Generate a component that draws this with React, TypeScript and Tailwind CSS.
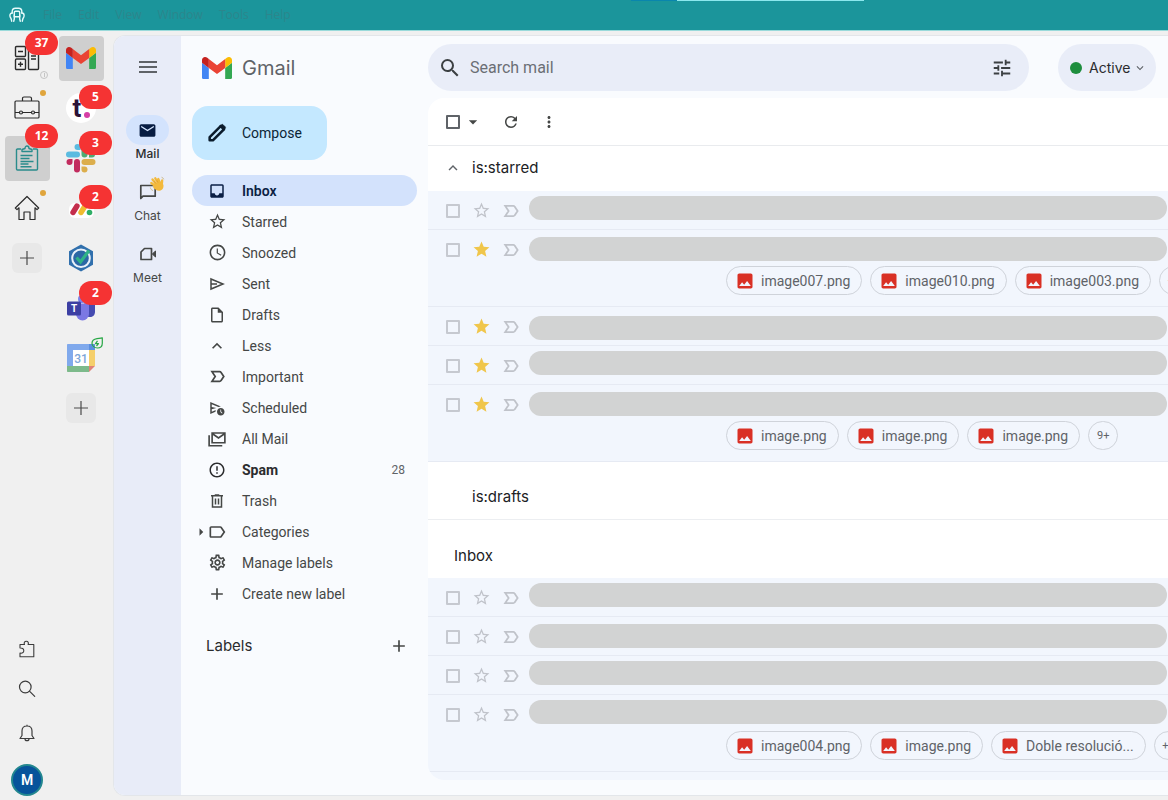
import { useState } from "react";
import type { ReactNode } from "react";
import {
  MdAdd,
  MdArrowDropDown,
  MdErrorOutline,
  MdInbox,
  MdKeyboardArrowDown,
  MdKeyboardArrowUp,
  MdLabelOutline,
  MdMail,
  MdMenu,
  MdMoreVert,
  MdOutlineInsertDriveFile,
  MdOutlineScheduleSend,
  MdOutlineSettings,
  MdPhoto,
  MdRefresh,
  MdSchedule,
  MdSearch,
  MdStar,
  MdStarBorder,
  MdTune,
} from "react-icons/md";

/* ---------- Logos and icons ---------- */

function GmailLogo({ className }: { className?: string }) {
  return (
    <svg viewBox="52 42 88 66" className={className} aria-hidden="true">
      <path fill="#4285f4" d="M58 108h14V74L52 59v43c0 3.32 2.69 6 6 6" />
      <path fill="#34a853" d="M120 108h14c3.32 0 6-2.69 6-6V59l-20 15" />
      <path fill="#fbbc04" d="M120 48v26l20-15v-8c0-7.42-8.47-11.65-14.4-7.2" />
      <path fill="#ea4335" d="M72 74V48l24 18 24-18v26L96 92" />
      <path fill="#c5221f" d="M52 51v8l20 15V48l-5.6-4.2c-5.94-4.45-14.4-.22-14.4 7.2" />
    </svg>
  );
}

function ChairLogo() {
  return (
    <svg viewBox="0 0 16 16" className="size-4" fill="none" stroke="#e6fbfb" strokeWidth="1.4" strokeLinejoin="round" strokeLinecap="round" aria-hidden="true">
      <path d="M3.200 6V4.600c0-2 1.200-3.400 3.200-3.400h3.200c2 0 3.200 1.400 3.200 3.400V6" />
      <path d="M5.300 5.500c0-.8.400-1.200 1.200-1.200h3c.8 0 1.200.4 1.200 1.200v4.200H5.300z" />
      <path d="M3.200 6C1.800 6 .9 7 .9 8.400c0 2 .8 2.400 1.200 3.200l.6 2.600M5.300 8v4l-.6 2.200M12.800 6c1.400 0 2.300 1 2.300 2.400 0 2-.8 2.400-1.200 3.200l-.6 2.600M10.700 8v4l.6 2.200" />
    </svg>
  );
}

function CalculatorIcon() {
  return (
    <svg viewBox="0 0 26 26" className="size-[26px]" fill="none" stroke="#2b2b2b" strokeWidth="1.400" aria-hidden="true">
      <rect x="1.500" y="1.500" width="10" height="10" rx="1" />
      <rect x="1.500" y="14" width="10" height="10.500" rx="1" />
      <rect x="14.500" y="1.500" width="10" height="23" rx="1" />
      <path d="M4 6.500h5M4 19.200h5M6.500 16.700v5M17 11h5M17 14h5M17 6h5" />
    </svg>
  );
}

function BriefcaseIcon() {
  return (
    <svg viewBox="0 0 26 26" className="size-[26px]" fill="none" stroke="#2b2b2b" strokeWidth="1.200" strokeLinejoin="round" aria-hidden="true">
      <rect x="1" y="6" width="24" height="17" rx="1" />
      <path d="M8.500 6V3.500C8.500 2.700 9 2 10 2h6c1 0 1.500.7 1.500 1.500V6M1 17.500h4.500M8.500 17.500h9M20.500 17.500H25" />
      <circle cx="7" cy="17.500" r="1.500" />
      <circle cx="19" cy="17.500" r="1.500" />
    </svg>
  );
}

function ClipboardIcon() {
  return (
    <svg viewBox="0 0 26 26" className="size-[26px]" fill="none" stroke="#2a8c8c" strokeWidth="1.400" strokeLinejoin="round" aria-hidden="true">
      <path d="M7 4H3.500c-.6 0-1 .4-1 1v19c0 .6.4 1 1 1h19c.6 0 1-.4 1-1V5c0-.6-.4-1-1-1H19" />
      <path d="M8 6.500V4.500l3-1C11 1.800 12 1 13 1s2 .8 2 2.500l3 1v2z" />
      <path d="M6.500 10.500h12M6.500 13.500h9M6.500 16.500h13M6.500 19h8M6.500 21.700h11" />
    </svg>
  );
}

function HomeIcon() {
  return (
    <svg viewBox="0 0 26 26" className="size-[26px]" fill="none" stroke="#2b2b2b" strokeWidth="1.200" strokeLinejoin="round" aria-hidden="true">
      <path d="M13 1.500 1.300 13l1.700 1.600 2-1.800V24.500h5V17h6v7.500h5V12.800l2 1.800 1.700-1.600z" />
    </svg>
  );
}

function SlackLogo() {
  return (
    <svg viewBox="0 0 30 30" className="size-[30px]" aria-hidden="true">
      <g fill="#5bbbe0">
        <path d="M11.500 1A3 3 0 0 0 8.500 4a3 3 0 0 0 3 3h3V4a3 3 0 0 0-3-3z" />
        <rect x="0" y="8.500" width="14" height="6" rx="3" />
      </g>
      <g fill="#4dab74">
        <rect x="15.500" y="1" width="6" height="13.500" rx="3" />
        <path d="M23 14.500v-3a3 3 0 1 1 3 3z" />
      </g>
      <g fill="#dcae4c">
        <rect x="15.500" y="16" width="14" height="6" rx="3" />
        <path d="M15.500 23.500h3a3 3 0 1 1-3 3z" />
      </g>
      <g fill="#c22c5e">
        <rect x="8" y="16" width="6" height="13.500" rx="3" />
        <path d="M6.500 16v3a3 3 0 1 1-3-3z" />
      </g>
    </svg>
  );
}

function MondayLogo() {
  return (
    <svg viewBox="0 0 30 30" className="size-[30px]" aria-hidden="true">
      <rect x="3" y="10" width="25" height="15" rx="6" fill="#fff" />
      <path d="m7 19.500 4-6.500" stroke="#c42e4c" strokeWidth="5.400" strokeLinecap="round" />
      <path d="m15 19.500 4-6.500" stroke="#f0bb2f" strokeWidth="5.400" strokeLinecap="round" />
      <circle cx="23.500" cy="19.500" r="2.800" fill="#2fae66" />
    </svg>
  );
}

function HexCheckLogo() {
  return (
    <svg viewBox="0 0 28 28" className="size-7" aria-hidden="true">
      <path d="M14 .5 26 7.200v13.600L14 27.500 2 20.800V7.200z" fill="#3170ad" />
      <circle cx="14" cy="14.200" r="8.800" fill="#2b68a5" stroke="#e9f2fa" strokeWidth="2" />
      <path d="m9.500 13.500 4 4.500L22 6.500" fill="none" stroke="#2fb386" strokeWidth="3.200" />
    </svg>
  );
}

function TeamsLogo() {
  return (
    <svg viewBox="0 0 30 30" className="size-[30px]" aria-hidden="true">
      <circle cx="23" cy="7" r="3" fill="#5059c9" />
      <path d="M18 10.500h10c.6 0 1 .4 1 1V19c0 3-2.300 5-5 5s-6-2-6-5z" fill="#454bb0" />
      <circle cx="16" cy="6" r="4" fill="#7b83eb" />
      <path d="M10 10.500h13V21a6.500 6.500 0 0 1-13 0z" fill="#7b78e3" />
      <rect x="1" y="8.500" width="14" height="14" rx="1.500" fill="#3c3fa3" />
      <text x="8" y="19.300" textAnchor="middle" fontSize="10" fontWeight="700" fill="#fff">T</text>
    </svg>
  );
}

function CalendarLogo() {
  return (
    <svg viewBox="0 0 30 30" className="size-[30px]" aria-hidden="true">
      <path d="M2 1h21v6H7v16H1V2c0-.6.400-1 1-1z" fill="#80a9ec" />
      <path d="M23 1h5c.6 0 1 .4 1 1v21h-6z" fill="#f5cf6b" />
      <path d="M23 1h5c.6 0 1 .4 1 1v5h-6z" fill="#5b8fe0" />
      <path d="M1 23h22v6H2c-.6 0-1-.4-1-1z" fill="#7dba8b" />
      <path d="M23 23h6l-6 6z" fill="#e08277" />
      <path d="M7 7h16v16H7z" fill="#fff" />
      <text x="15" y="19.500" textAnchor="middle" fontSize="12" fontWeight="500" fill="#7da5d8">31</text>
    </svg>
  );
}

function LeafIcon() {
  return (
    <svg viewBox="0 0 12 12" className="size-3" fill="none" stroke="#28a745" strokeWidth="1.200" strokeLinejoin="round" aria-hidden="true">
      <path d="M11.300.8v5.400c0 3-2.200 4.800-5 4.800S1 9 1 6.200c0-3 2.500-4.200 5-4.600 2-.3 3.800-.1 5.300-.8z" />
      <path d="m6.500 3.800-2 2.800h3l-2 2.400" />
    </svg>
  );
}

function PuzzleIcon() {
  return (
    <svg viewBox="0 0 18 18" className="size-[18px]" fill="none" stroke="#3c3c3c" strokeWidth="1.100" strokeLinejoin="round" aria-hidden="true">
      <path d="M2 8V4.500h4.500c-.8-1.600 0-3.300 1.800-3.300s2.600 1.700 1.800 3.300h5.700v12.300H2V13c2 .6 3.800-.4 3.800-2.300S4 7.800 2 8z" />
    </svg>
  );
}

function LoupeIcon() {
  return (
    <svg viewBox="0 0 18 18" className="size-[18px]" fill="none" stroke="#3c3c3c" strokeWidth="1.200" strokeLinecap="round" aria-hidden="true">
      <circle cx="7.300" cy="7" r="5.800" />
      <path d="m11.700 11.300 5 5" />
    </svg>
  );
}

function BellIcon() {
  return (
    <svg viewBox="0 0 18 18" className="size-[18px]" fill="none" stroke="#3c3c3c" strokeWidth="1.200" strokeLinejoin="round" aria-hidden="true">
      <path d="M9 2C5.800 2 4 4.300 4 7v4.500L2 14.500h14l-2-3V7c0-2.700-1.800-5-5-5zM9 2V.8M7 14.700c0 1.200.8 2 2 2s2-.8 2-2" />
    </svg>
  );
}

function PlusIcon() {
  return (
    <svg viewBox="0 0 16 16" className="size-4" stroke="#4a4a4a" strokeWidth="1.200" aria-hidden="true">
      <path d="M8 1v14M1 8h14" />
    </svg>
  );
}

function ChatIcon() {
  return (
    <svg viewBox="0 0 18 18" className="size-[18px]" fill="none" stroke="#454746" strokeWidth="1.700" aria-hidden="true">
      <path d="M1.800 15.500V2.500h14.400v10.700H4z" strokeLinejoin="round" />
    </svg>
  );
}

function WaveIcon() {
  return (
    <svg viewBox="0 0 16 16" className="size-4" aria-hidden="true">
      <g stroke="#f3b93c" strokeWidth="2.300" strokeLinecap="round">
        <path d="m7.500 8.500-4-5M9.500 7.500 6.300 2.300M11.200 7.500 9.300 3M7 10.500 2.300 7M12.700 9l.5-4.500" />
      </g>
      <path d="M5.500 8.500 11 5.500l3.300 3c.8 3-1 6-3.800 6.300C8 15 5 13 4 11z" fill="#f3b93c" />
      <path d="M6.800 7.500 5 5.200M9 6.500 7.700 4.200" stroke="#d9922a" strokeWidth=".6" />
      <path d="M1.300 11.500c.3 1.600 1.300 2.700 2.700 3M12.500 1.200c1.200.3 2 1 2.300 2.200" fill="none" stroke="#c9b98f" strokeWidth=".9" />
    </svg>
  );
}

function MeetIcon() {
  return (
    <svg viewBox="0 0 18 18" className="size-[18px]" fill="none" stroke="#454746" strokeWidth="1.700" strokeLinejoin="round" aria-hidden="true">
      <path d="M5.500 3.500h7v11H2V7z" />
      <path d="m13.300 9 3.200-3v6z" fill="#454746" strokeWidth="1" />
    </svg>
  );
}

function SentIcon() {
  return (
    <svg viewBox="0 0 24 24" className="size-[18px]" fill="none" stroke="currentColor" strokeWidth="2" aria-hidden="true">
      <path d="M4 5.300 20 12 4 18.700zM4 12h8" />
    </svg>
  );
}

function ImportantIcon({ className }: { className?: string }) {
  return (
    <svg viewBox="0 0 20 20" className={className} fill="none" stroke="currentColor" strokeWidth="1.800" aria-hidden="true">
      <path d="M4.200 4.900h8.100c.6 0 1 .2 1.300.7l3 4.400-3 4.400c-.3.5-.7.7-1.300.7H4.200L7.600 10z" />
    </svg>
  );
}

function PencilIcon() {
  return (
    <svg viewBox="0 0 24 24" className="size-[22px]" fill="none" stroke="#0b1c2c" strokeWidth="2.800" strokeLinejoin="round" aria-hidden="true">
      <path d="M4 20v-3.500L16 4.500l3.500 3.500L7.500 20z" />
      <path d="M15 3.800 17.300 2.600c.5-.2 1-.1 1.400.3l2.400 2.400c.4.4.4 1 .1 1.500L20 9z" fill="#0b1c2c" strokeWidth=".5" />
    </svg>
  );
}

function AllMailIcon() {
  return (
    <svg viewBox="0 0 24 24" className="size-[18px]" fill="none" stroke="currentColor" strokeWidth="2.200" aria-hidden="true">
      <path d="M5.500 4h17v13h-17zM6 5l8 5.500L22 5M1.500 7v14H19" />
    </svg>
  );
}

function TrashIcon() {
  return (
    <svg viewBox="0 0 24 24" className="size-[18px]" fill="none" stroke="currentColor" strokeWidth="2" aria-hidden="true">
      <path d="M4 5h16M9 4h6M6 5v15h12V5M10 8.500v8M14 8.500v8" />
    </svg>
  );
}

/* ---------- App rails ---------- */

// Vertical placement of a badge against its tile
const badgeTop = {
  over: "-top-[9px]",
  high: "-top-[2px]",
  low: "top-[2px]",
};

interface RailItemProps {
  label: string;
  icon: ReactNode;
  active?: boolean;
  badge?: number;
  badgeAt?: keyof typeof badgeTop;
  dot?: boolean;
  extra?: ReactNode;
}

function RailItem({ label, icon, active, badge, badgeAt = "high", dot, extra }: RailItemProps) {
  return (
    <div className="relative flex h-[50px] w-[54px] items-center justify-center">
      <button
        type="button"
        aria-label={label}
        className={`flex size-[45px] items-center justify-center rounded-sm ${active ? "bg-[#cfcfcf]" : ""}`}
      >
        {icon}
      </button>
      {dot && <span className="absolute right-2 top-[7px] size-[6px] rounded-full bg-[#e0a53d]" />}
      {extra}
      {badge !== undefined && (
        <span
          className={`absolute left-[25px] z-10 flex h-6 w-[33px] items-center justify-center rounded-full bg-[#f53333] font-['Open_Sans',sans-serif] text-xs font-bold text-white ${badgeTop[badgeAt]}`}
        >
          {badge}
        </span>
      )}
    </div>
  );
}

function AddTile({ label }: { label: string }) {
  return (
    <div className="flex h-[50px] w-[54px] items-center justify-center">
      <button type="button" aria-label={label} className="flex size-[30px] items-center justify-center rounded-md bg-[#e8e8e8]">
        <PlusIcon />
      </button>
    </div>
  );
}

function WorkspaceRail() {
  return (
    <nav aria-label="Workspaces" className="flex w-[54px] flex-col items-center">
      <RailItem
        label="Accounting"
        icon={<CalculatorIcon />}
        badge={37}
        extra={
          <span className="absolute bottom-1 right-[6px] flex size-2 items-center justify-center rounded-full border border-[#c4c4c4]">
            <span className="h-1 w-px bg-[#c4c4c4]" />
          </span>
        }
      />
      <RailItem label="Work" icon={<BriefcaseIcon />} dot />
      <RailItem label="Tasks" icon={<ClipboardIcon />} active badge={12} badgeAt="over" />
      <RailItem label="Home" icon={<HomeIcon />} dot />
      <AddTile label="Add workspace" />

      <div className="mt-auto flex flex-col items-center pb-1">
        <button type="button" aria-label="Extensions" className="flex h-10 w-10 items-center justify-center">
          <PuzzleIcon />
        </button>
        <button type="button" aria-label="Search" className="flex h-10 w-10 items-center justify-center">
          <LoupeIcon />
        </button>
        <button type="button" aria-label="Notifications" className="flex h-12 w-10 items-center justify-center">
          <BellIcon />
        </button>
        <button
          type="button"
          aria-label="Account"
          className="mt-[7px] flex size-8 items-center justify-center rounded-full border-2 border-[#23878f] bg-[#07539b] text-sm font-semibold text-white"
        >
          M
        </button>
      </div>
    </nav>
  );
}

function AppRail() {
  return (
    <nav aria-label="Apps" className="flex w-[54px] flex-col items-center">
      <RailItem label="Gmail" icon={<GmailLogo className="w-[30px]" />} active />
      <RailItem
        label="Toggl"
        icon={
          <span className="relative flex size-[30px] items-center justify-center rounded-full bg-white text-[26px] font-bold text-[#2c1338]">
            <span className="pr-2">t</span>
            <span className="absolute bottom-[5px] right-[6px] size-[6px] rounded-full bg-[#d63fa6]" />
          </span>
        }
        badge={5}
        badgeAt="low"
      />
      <RailItem label="Slack" icon={<SlackLogo />} badge={3} />
      <RailItem label="Monday" icon={<MondayLogo />} badge={2} badgeAt="low" />
      <RailItem label="Checks" icon={<HexCheckLogo />} />
      <RailItem label="Teams" icon={<TeamsLogo />} badge={2} />
      <RailItem
        label="Calendar"
        icon={<CalendarLogo />}
        extra={
          <span className="absolute right-[5px] top-1">
            <LeafIcon />
          </span>
        }
      />
      <AddTile label="Add app" />
    </nav>
  );
}

/* ---------- Gmail ---------- */

function ProductRail() {
  return (
    <nav aria-label="Products" className="flex w-[67px] shrink-0 flex-col items-center bg-[#e8ecf8] font-['Inter',sans-serif] text-xs text-[#454746]">
      <button type="button" aria-label="Main menu" className="mt-[19px] mb-9 text-[#5f6368]">
        <MdMenu size={24} />
      </button>
      <a href="#mail" className="flex h-[62px] flex-col items-center font-medium text-[#2b2c2e]">
        <span className="flex h-[30px] w-[43px] items-center justify-center rounded-full bg-[#d3e3fd] text-[#071c42]">
          <MdMail size={19} />
        </span>
        <span className="leading-[18px]">Mail</span>
      </a>
      <a href="#chat" className="flex h-[62px] flex-col items-center">
        <span className="relative flex h-[30px] w-[43px] items-center justify-center">
          <ChatIcon />
          <span className="absolute right-1 -top-px">
            <WaveIcon />
          </span>
        </span>
        <span className="leading-[18px]">Chat</span>
      </a>
      <a href="#meet" className="flex flex-col items-center">
        <span className="flex h-[30px] w-[43px] items-center justify-center">
          <MeetIcon />
        </span>
        <span className="leading-[18px]">Meet</span>
      </a>
    </nav>
  );
}

interface Folder {
  name: string;
  icon: ReactNode;
  count?: number;
  active?: boolean;
  bold?: boolean;
  caret?: boolean;
}

const folders: Folder[] = [
  { name: "Inbox", icon: <MdInbox size={18} />, active: true },
  { name: "Starred", icon: <MdStarBorder size={19} /> },
  { name: "Snoozed", icon: <MdSchedule size={19} /> },
  { name: "Sent", icon: <SentIcon /> },
  { name: "Drafts", icon: <MdOutlineInsertDriveFile size={18} /> },
  { name: "Less", icon: <MdKeyboardArrowUp size={20} /> },
  { name: "Important", icon: <ImportantIcon className="size-[19px]" /> },
  { name: "Scheduled", icon: <MdOutlineScheduleSend size={18} /> },
  { name: "All Mail", icon: <AllMailIcon /> },
  { name: "Spam", icon: <MdErrorOutline size={18} />, bold: true, count: 28 },
  { name: "Trash", icon: <TrashIcon /> },
  { name: "Categories", icon: <MdLabelOutline size={20} />, caret: true },
  { name: "Manage labels", icon: <MdOutlineSettings size={19} /> },
  { name: "Create new label", icon: <MdAdd size={20} /> },
];

function FolderLink({ folder }: { folder: Folder }) {
  return (
    <a
      href={`#${folder.name.toLowerCase().replace(/ /g, "-")}`}
      className={`relative flex h-[31px] items-center rounded-full pl-4 pr-3 text-sm ${
        folder.active ? "bg-[#d3e2fc] font-semibold text-[#0b1f45]" :
        folder.bold ? "font-bold text-[#2b2c2e]" :
        "text-[#454746]"
      }`}
    >
      {folder.caret && <MdArrowDropDown size={18} className="absolute left-0 -rotate-90" />}
      <span className="flex w-[18px] shrink-0 justify-center *:shrink-0">{folder.icon}</span>
      <span className="ml-4">{folder.name}</span>
      {folder.count !== undefined && <span className="ml-auto text-xs font-normal text-[#5f6368]">{folder.count}</span>}
    </a>
  );
}

function Sidebar() {
  return (
    <aside className="w-[247px] shrink-0 px-[11px]">
      <a href="#home" className="flex h-[70px] items-center gap-[10px] pl-[10px] pb-[6px] text-[#5f6368]">
        <GmailLogo className="w-[30px]" />
        <span className="font-['Inter',sans-serif] text-xl">Gmail</span>
      </a>
      <button type="button" className="flex h-[54px] w-[135px] items-center gap-[14px] rounded-2xl bg-[#c4e8ff] pl-[14px] text-sm text-[#0b2536]">
        <PencilIcon />
        Compose
      </button>
      <nav aria-label="Folders" className="mt-[15px]">
        {folders.map((folder) => (
          <FolderLink key={folder.name} folder={folder} />
        ))}
      </nav>
      <div className="mt-[13px] flex h-12 items-center justify-between pl-[14px] pr-2 text-[#2b2c2e]">
        <h2 className="font-['Inter',sans-serif] text-[15px]">Labels</h2>
        <button type="button" aria-label="Create label" className="text-[#454746]">
          <MdAdd size={20} />
        </button>
      </div>
    </aside>
  );
}

// Where the hidden subject line sits inside its row
const barOffset = {
  high: "pt-[5px]",
  mid: "pt-[7px]",
  low: "pt-[9px]",
};

interface Mail {
  id: string;
  starred?: boolean;
  bar: keyof typeof barOffset;
  files?: string[];
  more?: string;
}

const starredMails: Mail[] = [
  { id: "s1", bar: "high" },
  { id: "s2", bar: "mid", starred: true, files: ["image007.png", "image010.png", "image003.png"], more: "+4" },
  { id: "s3", bar: "low", starred: true },
  { id: "s4", bar: "high", starred: true },
  { id: "s5", bar: "mid", starred: true, files: ["image.png", "image.png", "image.png"], more: "9+" },
];

const inboxMails: Mail[] = [
  { id: "i1", bar: "high" },
  { id: "i2", bar: "mid" },
  { id: "i3", bar: "high" },
  { id: "i4", bar: "high", files: ["image004.png", "image.png", "Doble resolució..."], more: "+6" },
];

function MailRow({ mail }: { mail: Mail }) {
  const [starred, setStarred] = useState(Boolean(mail.starred));

  return (
    <li className={`overflow-hidden border-b border-[#e6eaf3] bg-[#f2f6fd] ${mail.files ? "h-[77px]" : "h-[39px]"}`}>
      <div className="flex items-start pl-[18px] text-[#c0c3ca]">
        <div className="flex h-[39px] items-center">
          <input
            type="checkbox"
            aria-label="Select conversation"
            className="size-[14px] appearance-none rounded-[1px] border-2 border-[#c6c9d0] checked:bg-[#5f6368]"
          />
          <button
            type="button"
            aria-label="Star"
            aria-pressed={starred}
            onClick={() => setStarred(!starred)}
            className={`ml-3 ${starred ? "text-[#f0c64b]" : ""}`}
          >
            {starred ? <MdStar size={19} /> : <MdStarBorder size={19} />}
          </button>
          <button type="button" aria-label="Mark as important" className="ml-[10px]">
            <ImportantIcon className="size-5" />
          </button>
        </div>
        <div className={`ml-2 mr-px flex-1 ${barOffset[mail.bar]}`}>
          <div className="h-6 rounded-full bg-[#d2d3d3]" />
        </div>
      </div>
      {mail.files && (
        <div className="-mt-[3px] flex gap-2 pl-[298px] text-sm text-[#5f6368]">
          {mail.files.map((file, index) => (
            <a
              key={index}
              href="#attachment"
              className="flex h-[29px] shrink-0 items-center gap-[6px] rounded-full border border-[#cfd3da] pl-2 pr-[11px]"
            >
              <MdPhoto size={20} className="text-[#d93025]" />
              {file}
            </a>
          ))}
          <button type="button" className="flex h-[29px] w-[30px] shrink-0 items-center justify-center rounded-full border border-[#cfd3da] text-[11px]">
            {mail.more}
          </button>
        </div>
      )}
    </li>
  );
}

function SearchHeader() {
  return (
    <header className="flex pt-2 pr-3 pb-[7px]">
      <form role="search" className="flex h-[47px] flex-1 items-center rounded-full bg-[#e9edf8] pl-[10px] pr-4">
        <button type="button" aria-label="Search mail" className="text-[#3c4043]">
          <MdSearch size={24} />
        </button>
        <input
          type="search"
          aria-label="Search mail"
          placeholder="Search mail"
          className="ml-2 min-w-0 flex-1 bg-transparent text-base outline-none placeholder:text-[#6b6f75]"
        />
        <button type="button" aria-label="Search options" className="text-[#3c4043]">
          <MdTune size={22} />
        </button>
      </form>
      <button type="button" className="ml-[29px] flex h-[47px] w-[98px] items-center rounded-full bg-[#e9edf8] pl-3 font-['Inter',sans-serif] text-sm text-[#2b2c2e]">
        <span className="mr-[7px] size-3 rounded-full bg-[#1e8e3e]" />
        Active
        <MdKeyboardArrowDown size={14} className="ml-[3px] text-[#5f6368]" />
      </button>
    </header>
  );
}

function MailList() {
  return (
    <main className="min-w-0 flex-1 pb-[15px]">
      <SearchHeader />
      <div className="overflow-hidden rounded-l-2xl bg-white">
        {/* Toolbar */}
        <div className="flex h-12 items-center border-b border-[#e9ebee] pl-[18px] text-[#454746]">
          <input
            type="checkbox"
            aria-label="Select all"
            className="size-[14px] appearance-none rounded-[1px] border-2 border-[#5f6368] checked:bg-[#5f6368]"
          />
          <button type="button" aria-label="Select" className="ml-[3px]">
            <MdArrowDropDown size={20} />
          </button>
          <button type="button" aria-label="Refresh" className="ml-[19px]">
            <MdRefresh size={18} />
          </button>
          <button type="button" aria-label="More" className="ml-5">
            <MdMoreVert size={18} />
          </button>
        </div>

        {/* Starred */}
        <section>
          <div className="flex h-[45px] items-center pl-4 pb-px text-[#202124]">
            <button type="button" aria-label="Collapse section" className="text-[#5f6368]">
              <MdKeyboardArrowUp size={18} />
            </button>
            <h2 className="ml-[10px] font-['Inter',sans-serif] text-[15px]">is:starred</h2>
          </div>
          <ul>
            {starredMails.map((mail) => (
              <MailRow key={mail.id} mail={mail} />
            ))}
          </ul>
        </section>

        {/* Drafts */}
        <section className="flex h-[58px] items-center border-b border-[#eceef1] pt-[14px] pl-11 text-[#202124]">
          <h2 className="font-['Inter',sans-serif] text-[15px]">is:drafts</h2>
        </section>

        {/* Inbox */}
        <section className="bg-[#f2f6fd] pb-2">
          <div className="flex h-[58px] items-center bg-white pt-[14px] pl-[26px] text-[#202124]">
            <h2 className="font-['Inter',sans-serif] text-[15px]">Inbox</h2>
          </div>
          <ul>
            {inboxMails.map((mail) => (
              <MailRow key={mail.id} mail={mail} />
            ))}
          </ul>
        </section>
      </div>
    </main>
  );
}

/* ---------- Window ---------- */

const menus = ["File", "Edit", "View", "Window", "Tools", "Help"];

function TitleBar() {
  return (
    <header className="relative flex h-[31px] items-center border-b border-[#9adada] bg-[#1b959b] pl-[9px]">
      <ChairLogo />
      <div className="ml-[10px] flex font-['Open_Sans',sans-serif] text-xs text-[#2c868c]">
        {menus.map((menu) => (
          <button key={menu} type="button" className="px-2">
            {menu}
          </button>
        ))}
      </div>
      <div className="absolute left-[54%] top-0 flex h-px w-[20%]">
        <span className="w-1/5 bg-[#0a86ad]" />
        <span className="flex-1 bg-[#8ce8ee]" />
      </div>
    </header>
  );
}

export default function App() {
  return (
    <div className="flex min-h-screen flex-col bg-[#f0f0f0] font-['Roboto',sans-serif]">
      <TitleBar />
      <div className="flex flex-1">
        <div className="flex w-[113px] shrink-0 pt-[2px]">
          <WorkspaceRail />
          <AppRail />
        </div>
        <div className="mt-1 mb-1 flex min-w-0 flex-1 overflow-hidden rounded-l-xl border-y border-l border-[#e3e6ea] bg-[#f9fbfe]">
          <ProductRail />
          <Sidebar />
          <MailList />
        </div>
      </div>
    </div>
  );
}
